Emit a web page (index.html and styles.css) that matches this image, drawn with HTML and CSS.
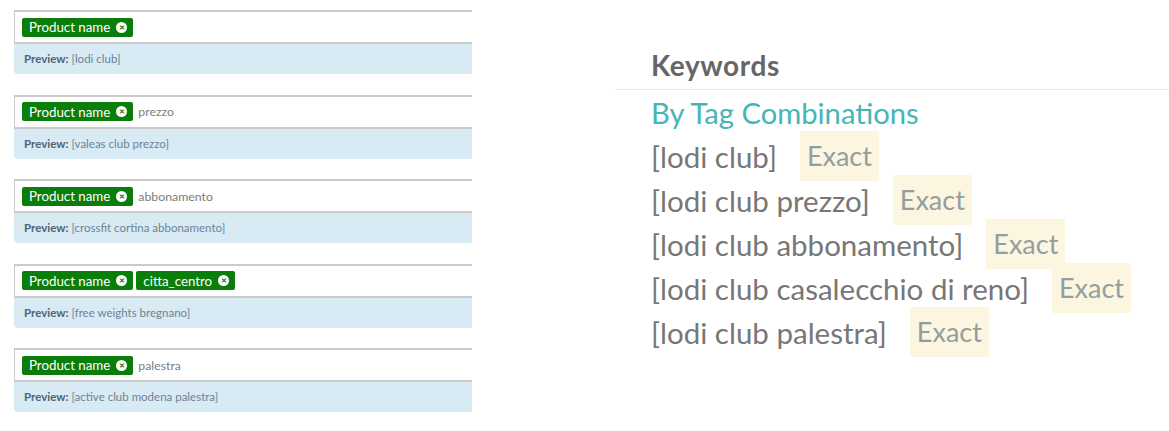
FILE: index.html
```html
<!DOCTYPE html>
<html>
<head>
<meta charset="utf-8">
<link rel="stylesheet" href="styles.css">
</head>
<body>
<div class="page">
  <div class="left">
    <div class="field">
      <div class="input">
        <span class="tag">Product name <span class="x">&#x2715;</span></span>
      </div>
      <div class="preview"><b>Preview:</b> [lodi club]</div>
    </div>
    <div class="field">
      <div class="input">
        <span class="tag">Product name <span class="x">&#x2715;</span></span><span class="typed">prezzo</span>
      </div>
      <div class="preview"><b>Preview:</b> [valeas club prezzo]</div>
    </div>
    <div class="field">
      <div class="input">
        <span class="tag">Product name <span class="x">&#x2715;</span></span><span class="typed">abbonamento</span>
      </div>
      <div class="preview"><b>Preview:</b> [crossfit cortina abbonamento]</div>
    </div>
    <div class="field">
      <div class="input">
        <span class="tag">Product name <span class="x">&#x2715;</span></span><span class="tag">citta_centro <span class="x">&#x2715;</span></span>
      </div>
      <div class="preview"><b>Preview:</b> [free weights bregnano]</div>
    </div>
    <div class="field">
      <div class="input">
        <span class="tag">Product name <span class="x">&#x2715;</span></span><span class="typed">palestra</span>
      </div>
      <div class="preview"><b>Preview:</b> [active club modena palestra]</div>
    </div>
  </div>
  <div class="right">
    <h2 class="heading">Keywords</h2>
    <div class="list">
      <div class="row sub">By Tag Combinations</div>
      <div class="row"><span class="kw">[lodi club]</span><span class="badge">Exact</span></div>
      <div class="row"><span class="kw">[lodi club prezzo]</span><span class="badge">Exact</span></div>
      <div class="row"><span class="kw">[lodi club abbonamento]</span><span class="badge">Exact</span></div>
      <div class="row"><span class="kw">[lodi club casalecchio di reno]</span><span class="badge">Exact</span></div>
      <div class="row"><span class="kw">[lodi club palestra]</span><span class="badge">Exact</span></div>
    </div>
  </div>
</div>
</body>
</html>
```

FILE: styles.css
```css
html, body {
  margin: 0;
  padding: 0;
  background: #ffffff;
}
body {
  font-family: Lato, "Open Sans", "Liberation Sans", sans-serif;
}
.page {
  display: flex;
  align-items: flex-start;
}
.left {
  width: 458px;
  margin-left: 14px;
  padding-top: 10px;
  display: flex;
  flex-direction: column;
  gap: 20.5px;
}
.field {
  display: flex;
  flex-direction: column;
}
.input {
  height: 30px;
  border-top: 2px solid #cbcbcb;
  border-bottom: 2px solid #cbcbcb;
  border-left: 1px solid #cbcbcb;
  background: #fff;
  display: flex;
  align-items: center;
  padding-left: 7px;
  gap: 3px;
}
.tag {
  display: inline-flex;
  align-items: center;
  height: 19px;
  padding: 0 6px 0 7px;
  background: #0b7d0b;
  color: #fff;
  font-size: 13.3px;
  border-radius: 2px;
  gap: 6px;
}
.x {
  width: 11px;
  height: 11px;
  border-radius: 50%;
  background: #fff;
  color: #0b7d0b;
  font-size: 7px;
  font-weight: bold;
  display: inline-flex;
  align-items: center;
  justify-content: center;
  line-height: 1;
}
.typed {
  color: #7d7d7d;
  font-size: 12.3px;
  margin-left: 2px;
}
.preview {
  height: 30px;
  background: #d8eaf4;
  border-bottom-left-radius: 4px;
  display: flex;
  align-items: center;
  padding-left: 10px;
  padding-bottom: 1px;
  box-sizing: border-box;
  font-size: 11.5px;
  color: #6d8494;
}
.preview b {
  color: #4d6577;
  margin-right: 3px;
}
.right {
  margin-left: 143px;
  flex: 1;
}
.heading {
  margin: 0;
  padding: 47px 0 5px 36px;
  font-size: 28px;
  line-height: 37px;
  letter-spacing: 0.6px;
  font-weight: bold;
  color: #666;
  border-bottom: 1px solid #e6e6e6;
}
.list {
  padding-left: 36px;
}
.row {
  height: 44px;
  display: flex;
  align-items: center;
  font-size: 29.5px;
  color: #777;
}
.row.sub {
  font-size: 29.2px;
  color: #43b6b6;
}
.badge {
  margin-left: 23px;
  height: 50px;
  line-height: 50px;
  padding: 0 7px;
  font-size: 27px;
  background: #fcf5e0;
  color: #939e9e;
  flex-shrink: 0;
}
```
